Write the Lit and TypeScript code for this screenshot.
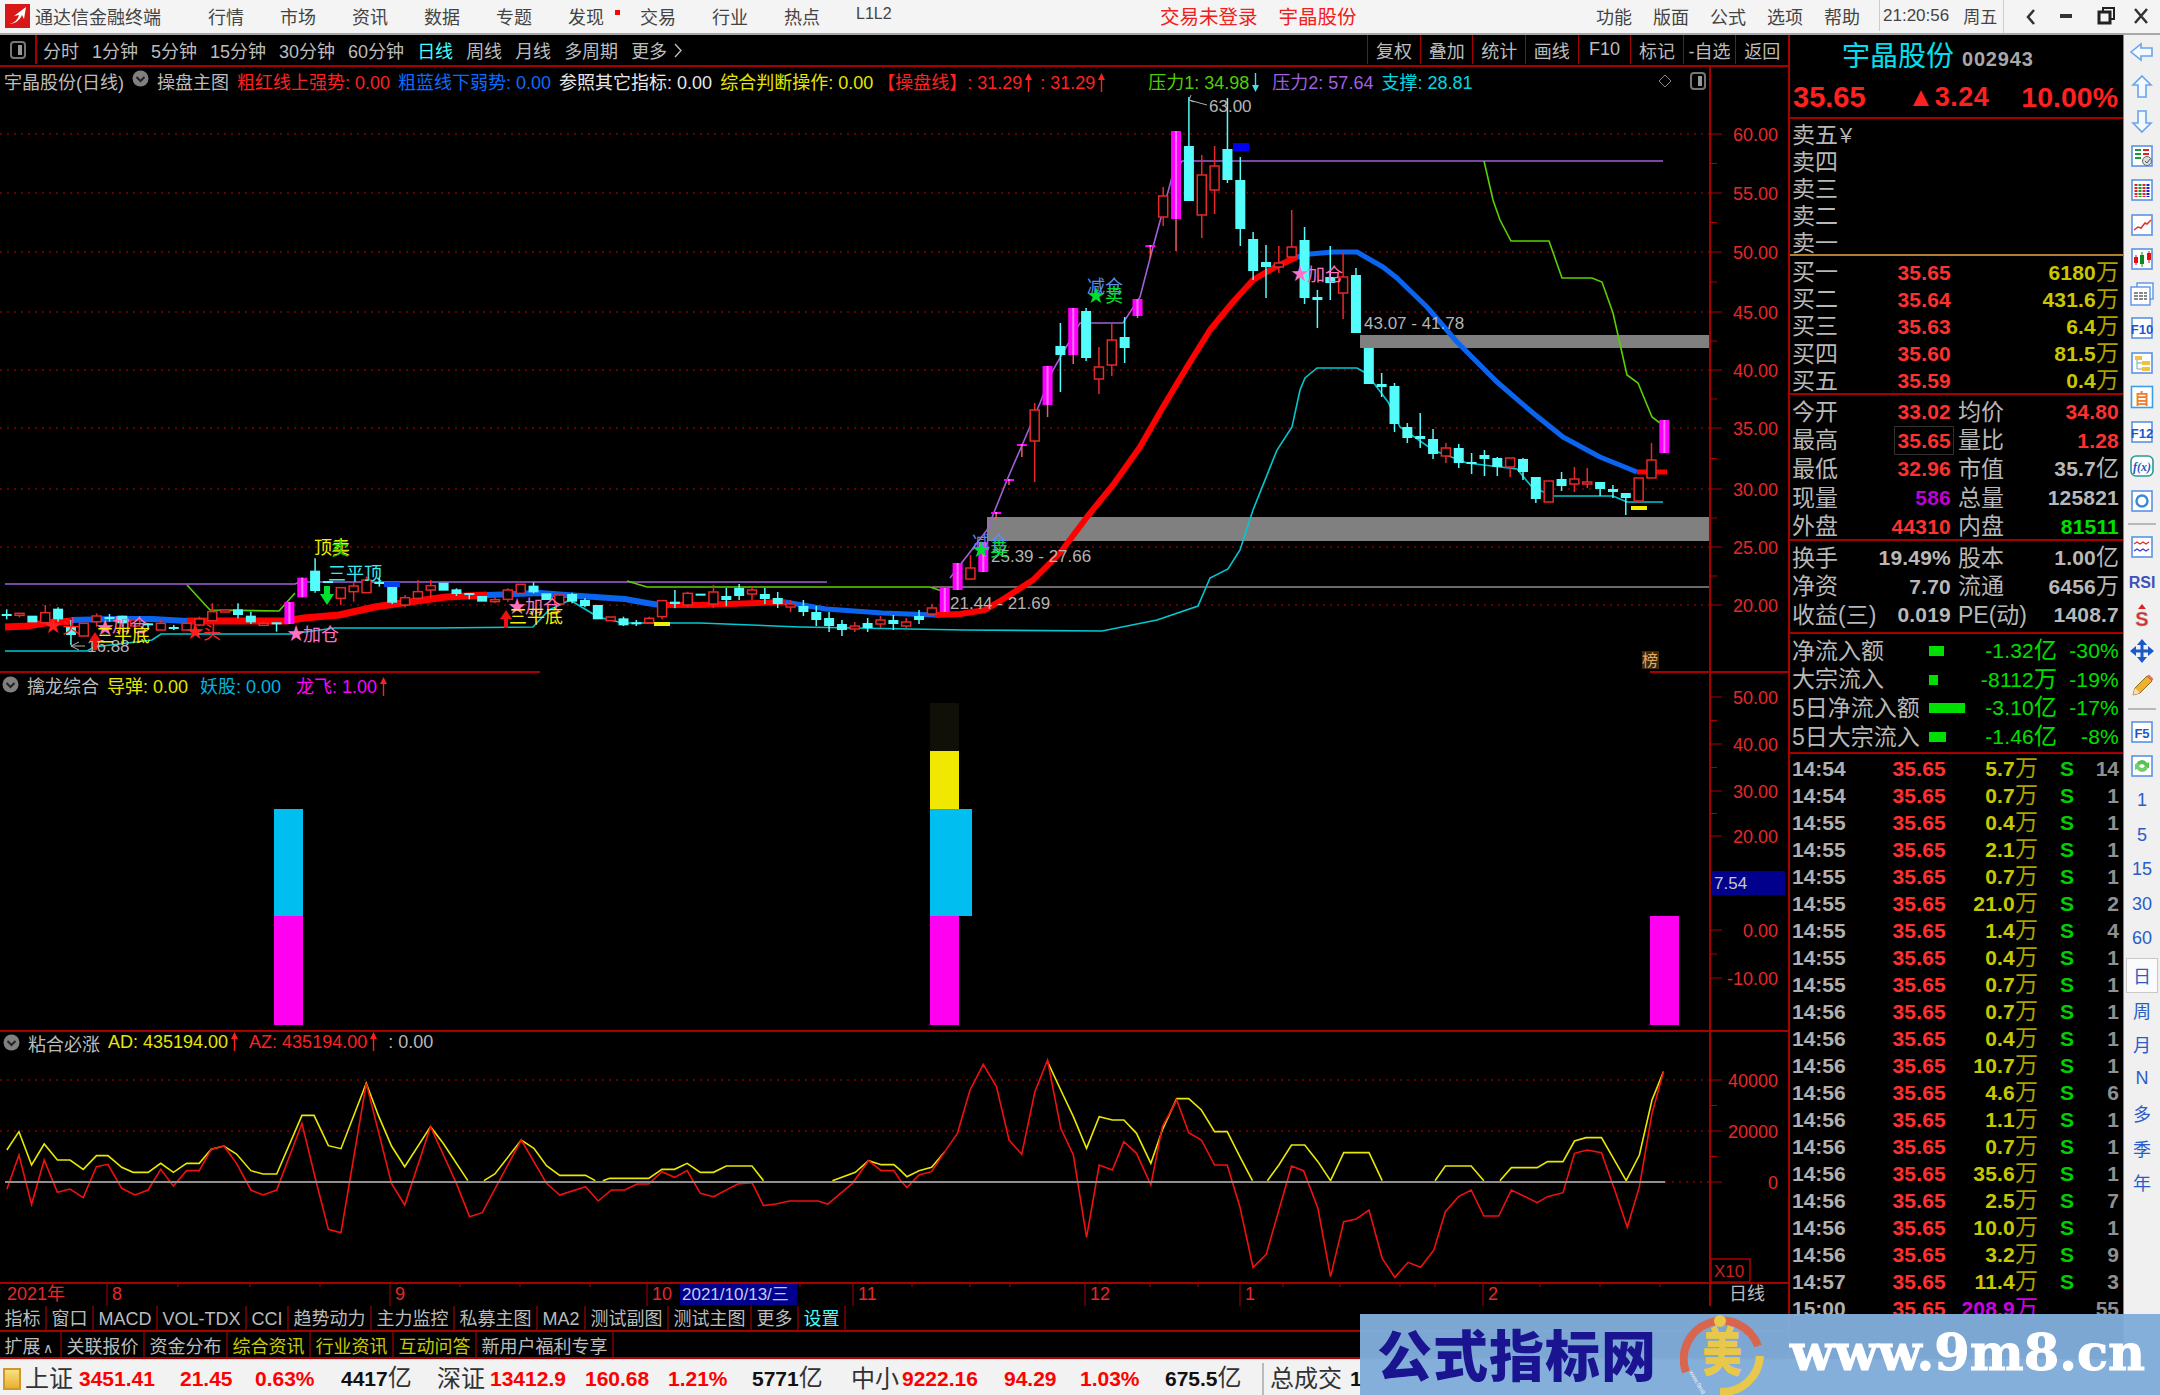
import {css, html, LitElement, svg} from "lit";
import {customElement} from "lit/decorators.js";

type Pt = number[];
type Candle = [string, number, number, number?, number?];

const pts = (a: Pt[]) => a.map((p) => p.join(",")).join(" ");

// candle centres, 12.85px apart
const candleX = (i: number) => 6.7 + 12.85 * i;

// left part: y given in crop units (520 + v / 3)
const leftCandles: Candle[] = ([
    ["c", 282, 285, 268, 298], ["r", 280, 284, 280, 292], ["c", 287, 307], ["r", 278, 308, 255, 308],
    ["c", 266, 298, 262, 305], ["c", 320, 345, 300, 375], ["r", 310, 348], ["r", 288, 305, 280, 320],
    ["c", 291, 294, 282, 305], ["c", 287, 310, 287, 320], ["r", 300, 318], ["c", 310, 313, 310, 330],
    ["r", 310, 330, 300, 330], ["c", 321, 324, 315, 330], ["r", 310, 330], ["r", 297, 315, 290, 318],
    ["r", 275, 302, 250, 305], ["r", 270, 274], ["c", 268, 285, 250, 295], ["c", 287, 307, 275, 312],
    ["r", 310, 314, 305, 316], ["c", 307, 309, 307, 335], ["m", 246, 312], ["m", 173, 232],
    ["c", 152, 213, 115, 218], ["c", 183, 186], ["r", 203, 235, 203, 255], ["r", 198, 215, 185, 245],
    ["r", 180, 218, 170, 218], ["c", 186, 189, 170, 200], ["c", 200, 248, 200, 252], ["r", 233, 255, 225, 262],
    ["r", 215, 235, 180, 240], ["r", 197, 210, 180, 235], ["c", 188, 212], ["c", 208, 222, 205, 228],
    ["c", 219, 223, 219, 238], ["c", 228, 245], ["r", 239, 242, 232, 248], ["r", 210, 238, 205, 245],
    ["r", 193, 220], ["c", 197, 217, 187, 220], ["c", 220, 240], ["r", 225, 252], ["c", 222, 245, 218, 250],
    ["c", 240, 258, 235, 262], ["c", 255, 298], ["r", 291, 302], ["c", 295, 316, 290, 318],
    ["c", 307, 310, 300, 318], ["r", 295, 308, 290, 310], ["r", 242, 290, 240, 298], ["c", 245, 252, 210, 265],
    ["r", 220, 255, 215, 262], ["c", 221, 224],
] as Candle[]).map(([t, a, b, c, d]) => [t, 520 + a / 3, 520 + b / 3, c === undefined ? undefined : 520 + c / 3, d === undefined ? undefined : 520 + d / 3] as Candle);

// the rest in page pixels
const restCandles: Candle[] = [
    ["r", 592, 604, 585, 608], ["c", 596, 600, 588, 606], ["c", 588, 596, 584, 600], ["r", 590, 594, 586, 600],
    ["c", 594, 599, 588, 604], ["c", 598, 604, 592, 608], ["r", 604, 607, 600, 612], ["c", 606, 612, 600, 616],
    ["c", 612, 620, 606, 626], ["c", 618, 626, 612, 632], ["c", 624, 630, 620, 636], ["r", 626, 629, 622, 632],
    ["c", 623, 628, 618, 632], ["r", 620, 624, 616, 628], ["c", 620, 624, 615, 630], ["r", 622, 626, 618, 628],
    ["c", 616, 620, 610, 624], ["r", 608, 614, 604, 616],
    ["m", 588, 612], ["m", 563, 590], ["r", 568, 579, 555, 579], ["m", 542, 572],
    ["m", 512, 513, 512, 520], ["m", 479, 480, 479, 485], ["m", 444, 445, 444, 457], ["r", 410, 441, 403, 482],
    ["m", 366, 405, 366, 417], ["c", 346, 355, 323, 392], ["m", 308, 355, 308, 364], ["c", 311, 358, 308, 361],
    ["r", 367, 379, 347, 394], ["r", 340, 365, 323, 376], ["c", 337, 348, 317, 363], ["m", 299, 316, 299, 318],
    ["m", 245, 246, 245, 258], ["r", 196, 217, 187, 226], ["m", 131, 219, 131, 251], ["c", 146, 201, 97, 201],
    ["r", 175, 215, 155, 238], ["r", 166, 190, 146, 214], ["c", 149, 180, 98, 183], ["c", 180, 229, 157, 246],
    ["c", 239, 271, 232, 280], ["c", 262, 267, 245, 298], ["r", 263, 267, 246, 273], ["r", 247, 257, 210, 257],
    ["c", 240, 298, 227, 304], ["c", 297, 300, 290, 328], ["c", 277, 283, 246, 300], ["r", 277, 293, 252, 319],
    ["c", 275, 333, 268, 333], ["c", 348, 384], ["c", 384, 387, 373, 397], ["c", 386, 424, 383, 432],
    ["c", 427, 438, 423, 443], ["c", 436, 439, 413, 448], ["c", 439, 454, 429, 459], ["r", 448, 456, 443, 463],
    ["c", 448, 463, 444, 468], ["c", 462, 464, 453, 474], ["c", 455, 459, 450, 476], ["c", 458, 467, 457, 476],
    ["r", 458, 467, 458, 477], ["c", 459, 472, 458, 480], ["c", 477, 499, 477, 503], ["r", 481, 502],
    ["c", 479, 486, 472, 491], ["r", 479, 484, 467, 492], ["r", 482, 484, 468, 488], ["c", 482, 489, 482, 496],
    ["c", 489, 492, 485, 498], ["c", 493, 498, 493, 515], ["r", 478, 501, 478, 503], ["r", 460, 478, 443, 478],
    ["m", 420, 453],
];
const candles = [...leftCandles, ...restCandles];

const thick: [string, Pt[], number][] = [
    ["#f00", [[5, 627], [27, 626], [45, 623], [71, 621]], 7],
    ["#0a64f0", [[71, 620], [112, 619], [152, 619], [187, 621]], 6],
    ["#f00", [[187, 621], [223, 621], [286, 621], [304, 618], [339, 615], [375, 607], [402, 603], [446, 597], [487, 595]], 7],
    ["#0a64f0", [[487, 595], [540, 593], [580, 596], [625, 599], [647, 603], [660, 605]], 6],
    ["#f00", [[660, 605], [700, 605], [785, 602]], 6],
    ["#0a64f0", [[785, 602], [826, 609], [882, 613], [935, 615]], 5],
    ["#f00", [[935, 615], [960, 614], [985, 610], [1005, 598], [1033, 580], [1060, 553], [1087, 517], [1113, 485], [1140, 447], [1163, 407], [1187, 367], [1210, 330], [1233, 302], [1253, 280], [1275, 267], [1297, 257]], 6],
    ["#0a64f0", [[1297, 257], [1310, 254], [1333, 252], [1357, 252], [1383, 267], [1397, 278], [1427, 307], [1457, 342], [1497, 382], [1533, 413], [1563, 437], [1600, 457], [1637, 472]], 5],
    ["#f00", [[1637, 472], [1667, 472]], 5],
];

const thin: [string, Pt[]][] = [
    ["#a060d8", [[5, 584], [295, 584], [300, 582], [827, 582]]],
    ["#a060d8", [[950, 578], [987, 530], [1007, 480], [1023, 443], [1040, 403], [1053, 370], [1080, 323], [1123, 323], [1140, 297], [1153, 247], [1172, 177], [1182, 161], [1663, 161]]],
    ["#5ad000", [[187, 585], [210, 610], [279, 611], [295, 593]]],
    ["#5ad000", [[627, 581], [647, 587], [930, 587], [945, 592]]],
    ["#5ad000", [[1484, 161], [1493, 200], [1500, 220], [1511, 241], [1549, 241], [1562, 278], [1592, 278], [1602, 282], [1613, 313], [1627, 375], [1638, 383], [1652, 417], [1660, 423]]],
    ["#00c8d0", [[5, 651], [87, 651], [94, 647], [152, 640], [161, 634], [290, 634], [335, 628], [435, 628], [533, 627], [549, 610], [570, 600], [598, 617], [623, 623], [700, 623], [800, 627], [965, 630], [1102, 631], [1157, 620], [1198, 606], [1210, 578], [1228, 569], [1240, 550], [1253, 510], [1277, 450], [1292, 427], [1300, 390], [1305, 378], [1317, 368], [1357, 368], [1364, 372], [1373, 382], [1388, 402], [1400, 427], [1433, 450], [1467, 463], [1517, 469], [1532, 487], [1553, 496], [1613, 496], [1627, 502], [1663, 502]]],
];

// third panel lines, read off two crops
const a = (p: number[]) => [p[0] / 1.742, 1020 + p[1] / 3];
const b = (p: number[]) => [900 + p[0] / 1.742, 1020 + p[1] / 3];
const yellowLines: Pt[][] = [
    [[12, 390], [33, 335], [55, 435], [77, 372], [100, 420], [122, 420], [145, 448], [168, 407], [188, 407], [212, 442], [232, 457], [258, 457], [280, 430], [302, 457], [325, 430], [347, 430], [368, 388], [390, 378], [412, 402], [437, 452], [458, 462], [482, 462], [526, 286], [547, 286], [572, 377], [594, 386], [638, 190], [660, 290], [682, 378], [705, 440], [750, 320], [772, 370], [815, 482]].map(a),
    [[843, 482], [862, 462], [908, 360], [930, 385], [952, 437], [975, 466], [1020, 466], [1037, 482]].map(a),
    [[1050, 482], [1062, 475], [1130, 475], [1153, 448], [1175, 448], [1197, 430], [1220, 457], [1243, 457], [1265, 438], [1310, 438], [1330, 482]].map(a),
    [[1450, 482], [1490, 457], [1513, 422], [1535, 434], [1557, 434], [1568, 450]].map(a).concat([[0, 450], [12, 470], [33, 452], [55, 442], [78, 395]].map(b)),
    [[257, 125], [280, 210], [302, 290], [325, 385], [347, 290], [370, 300], [390, 300], [412, 340], [437, 430], [457, 330], [482, 236], [503, 236], [525, 270], [548, 335], [570, 335], [592, 410], [614, 482]].map(b),
    [[640, 482], [660, 435], [682, 375], [705, 375], [728, 425], [750, 482], [773, 398], [817, 398], [840, 482]].map(b),
    [[932, 482], [950, 438], [995, 438], [1017, 482]].map(b),
    [[1045, 482], [1065, 443], [1110, 443], [1128, 425], [1155, 425], [1175, 363], [1195, 353], [1222, 353], [1265, 482], [1288, 405], [1310, 240], [1330, 155]].map(b),
];
const redLine: Pt[] = [
    ...[[12, 508], [33, 405], [55, 553], [77, 420], [100, 517], [122, 507], [145, 533], [168, 440], [188, 433], [212, 505], [235, 525], [258, 510], [280, 448], [302, 498], [325, 452], [347, 452], [368, 388], [390, 378], [412, 430], [437, 510], [458, 525], [482, 510], [526, 310], [550, 480], [572, 628], [594, 638], [638, 190], [682, 490], [705, 555], [750, 320], [795, 490], [818, 590], [840, 578], [908, 360], [952, 490], [975, 525], [1020, 500], [1042, 543], [1065, 510], [1088, 510], [1110, 492], [1130, 492], [1153, 455], [1175, 472], [1197, 452], [1220, 520], [1243, 530], [1285, 492], [1310, 488], [1330, 557], [1352, 552], [1375, 543], [1425, 543], [1442, 552], [1485, 490], [1513, 422], [1535, 452], [1557, 452], [1568, 480]].map(a),
    ...[[12, 503], [33, 465], [55, 455], [78, 395], [100, 340], [122, 210], [145, 133], [168, 200], [190, 360], [212, 403], [235, 215], [257, 120], [280, 325], [302, 405], [325, 652], [347, 435], [370, 450], [390, 365], [412, 400], [437, 495], [457, 320], [482, 240], [503, 338], [525, 360], [548, 435], [570, 435], [592, 560], [615, 742], [638, 703], [682, 438], [703, 452], [728, 565], [750, 770], [773, 605], [795, 597], [817, 570], [840, 715], [862, 772], [885, 727], [907, 742], [930, 690], [950, 575], [973, 530], [995, 510], [1017, 588], [1043, 588], [1065, 510], [1110, 548], [1128, 530], [1155, 518], [1175, 400], [1197, 390], [1222, 398], [1245, 510], [1267, 622], [1288, 500], [1310, 280], [1330, 155]].map(b),
];

const priceTicks: [string, number][] = [["60.00", 134], ["55.00", 193], ["50.00", 252], ["45.00", 312], ["40.00", 370], ["35.00", 428], ["30.00", 489], ["25.00", 547], ["20.00", 605]];
const volTicks: [string, number][] = [["50.00", 697], ["40.00", 744], ["30.00", 791], ["20.00", 836], ["0.00", 930], ["-10.00", 978]];
const adTicks: [string, number][] = [["40000", 1080], ["20000", 1131], ["0", 1182]];

const menus = ["行情", "市场", "资讯", "数据", "专题", "发现", "交易", "行业", "热点", "L1L2"];
const sysMenus = ["功能", "版面", "公式", "选项", "帮助"];
const periods = ["分时", "1分钟", "5分钟", "15分钟", "30分钟", "60分钟", "日线", "周线", "月线", "多周期", "更多"];
const tools = ["复权", "叠加", "统计", "画线", "F10", "标记", "-自选", "返回"];
const tabs1 = ["指标", "窗口", "MACD", "VOL-TDX", "CCI", "趋势动力", "主力监控", "私募主图", "MA2", "测试副图", "测试主图", "更多", "设置"];
const tabs2 = ["扩展", "关联报价", "资金分布", "综合资讯", "行业资讯", "互动问答", "新用户福利专享"];

const buys = [["买一", "35.65", "6180万"], ["买二", "35.64", "431.6万"], ["买三", "35.63", "6.4万"], ["买四", "35.60", "81.5万"], ["买五", "35.59", "0.4万"]];
const quoteRows = [
    ["今开", "33.02", "red", "均价", "34.80", "red"], ["最高", "35.65", "red boxed", "量比", "1.28", "red"], ["最低", "32.96", "red", "市值", "35.7亿", "grey"],
    ["现量", "586", "purple", "总量", "125821", "grey"], ["外盘", "44310", "red", "内盘", "81511", "green"],
];
const finRows = [["换手", "19.49%", "股本", "1.00亿"], ["净资", "7.70", "流通", "6456万"], ["收益(三)", "0.019", "PE(动)", "1408.7"]];
const flowRows: [string, number, number, string, string][] = [
    ["净流入额", 15, 10, "-1.32亿", "-30%"], ["大宗流入", 9, 10, "-8112万", "-19%"], ["5日净流入额", 36, 10, "-3.10亿", "-17%"], ["5日大宗流入", 17, 10, "-1.46亿", "-8%"],
];
const ticks = [
    ["14:54", "5.7万", "14"], ["14:54", "0.7万", "1"], ["14:55", "0.4万", "1"], ["14:55", "2.1万", "1"], ["14:55", "0.7万", "1"], ["14:55", "21.0万", "2"], ["14:55", "1.4万", "4"],
    ["14:55", "0.4万", "1"], ["14:55", "0.7万", "1"], ["14:56", "0.7万", "1"], ["14:56", "0.4万", "1"], ["14:56", "10.7万", "1"], ["14:56", "4.6万", "6"], ["14:56", "1.1万", "1"],
    ["14:56", "0.7万", "1"], ["14:56", "35.6万", "1"], ["14:56", "2.5万", "7"], ["14:56", "10.0万", "1"], ["14:56", "3.2万", "9"], ["14:57", "11.4万", "3"], ["15:00", "208.9万", "55"],
];
const statusItems: [string, string, number][] = [
    ["上证", "lab", 25], ["3451.41", "up", 79], ["21.45", "up", 180], ["0.63%", "up", 255], ["4417亿", "amt", 341],
    ["深证", "lab", 437], ["13412.9", "up", 490], ["160.68", "up", 585], ["1.21%", "up", 668], ["5771亿", "amt", 752],
    ["中小", "lab", 851], ["9222.16", "up", 902], ["94.29", "up", 1004], ["1.03%", "up", 1080], ["675.5亿", "amt", 1165],
    ["", "sep", 1262], ["总成交", "lab", 1268], ["1", "amt", 1348],
];

const box = svg`<rect x="3" y="3" width="20" height="20" fill="#fff" stroke="#5b93e6" stroke-width="1.6"/>`;
const iconMap: Record<string, unknown> = {
    left: svg`<path d="M2 13 12 5v4h11v8H12v4z" fill="#f4f8ff" stroke="#69a4ea" stroke-width="1.6"/>`,
    up: svg`<path d="M13 2 22 11h-5v12H9V11H4z" fill="#f4f8ff" stroke="#69a4ea" stroke-width="1.6"/>`,
    down: svg`<path d="M13 24 22 15h-5V3H9v12H4z" fill="#f4f8ff" stroke="#69a4ea" stroke-width="1.6"/>`,
    list: svg`${box}<path d="M6 7h6M6 11h6M6 15h6" stroke="#1a9a2a" stroke-width="2"/><path d="M14 7h6M14 11h6" stroke="#e02020" stroke-width="2"/><circle cx="18" cy="18" r="4.5" fill="#ddd" stroke="#666"/><path d="M16 18l2 2 3-4" stroke="#555" fill="none"/>`,
    grid: svg`${box}<path d="M7 7v13" stroke="#e02020" stroke-width="3" stroke-dasharray="2 1"/><path d="M11 7v13" stroke="#1a9a2a" stroke-width="3" stroke-dasharray="2 1"/><path d="M15 7v13" stroke="#e02020" stroke-width="3" stroke-dasharray="2 1"/><path d="M19 7v13" stroke="#2020d0" stroke-width="3" stroke-dasharray="2 1"/>`,
    line: svg`${box}<path d="M5 18l4-3 3 1 4-5 2 1 4-4" stroke="#e03030" fill="none" stroke-width="1.5"/>`,
    candle: svg`${box}<path d="M7 9v10M20 5v12" stroke="#d01010"/><path d="M13 6v15" stroke="#108a20"/><rect x="5" y="11" width="4" height="6" fill="#e01010"/><rect x="11" y="9" width="4" height="9" fill="#108a20"/><rect x="18" y="7" width="4" height="7" fill="#e01010"/>`,
    copy: svg`<rect x="8" y="2" width="16" height="16" fill="#fff" stroke="#5b93e6" stroke-width="1.4"/><rect x="2" y="6" width="19" height="18" fill="#fff" stroke="#5b93e6" stroke-width="1.4"/><path d="M5 12h13M5 15h13M5 18h13" stroke="#888" stroke-width="2" stroke-dasharray="4 1"/>`,
    f10: svg`${box}<text x="13" y="18.500" text-anchor="middle" class="ico-t">F10</text>`,
    tree: svg`${box}<rect x="6" y="6" width="7" height="4" fill="#f0c040"/><rect x="13" y="11" width="8" height="4" fill="#f0c040"/><rect x="13" y="17" width="8" height="4" fill="#f0c040"/><path d="M8 10v9h5M8 13h5" stroke="#7aa" fill="none"/>`,
    self: svg`<rect x="2.500" y="2.500" width="21" height="21" fill="#fff" stroke="#38a0e8" stroke-width="1.6"/><text x="13" y="19.500" text-anchor="middle" class="ico-z">自</text>`,
    f12: svg`${box}<text x="13" y="18.500" text-anchor="middle" class="ico-t">F12</text>`,
    fx: svg`<rect x="2" y="3" width="22" height="20" rx="5" fill="#fff" stroke="#2a9a90" stroke-width="1.6"/><text x="13" y="18" text-anchor="middle" class="ico-f">f(x)</text>`,
    ring: svg`${box}<circle cx="13" cy="13" r="5.5" fill="none" stroke="#3a88d8" stroke-width="2.4"/>`,
    wave: svg`${box}<path d="M5 10l3-2 3 2 3-2 3 2 3-2" stroke="#e03030" fill="none" stroke-width="1.4"/><path d="M5 17l3-2 3 2 3-2 3 2 3-2" stroke="#4040d0" fill="none" stroke-width="1.4"/>`,
    rsi: svg`<text x="13" y="19" text-anchor="middle" class="ico-r">RSI</text>`,
    sell: svg`<path d="M13 1l4 5h-8z" fill="#e02020"/><text x="13" y="23" text-anchor="middle" class="ico-s">S</text>`,
    move: svg`<path d="M13 1l5 6h-3.500v4.500H19V8l6 5-6 5v-3.500h-4.500V19H18l-5 6-5-6h3.500v-4.500H7V18l-6-5 6-5v3.500h4.500V7H8z" fill="#1a58c8"/>`,
    pencil: svg`<path d="M4 23l2-7L18 4l5 5L11 21z" fill="#f0b030" stroke="#8a6a20"/><path d="M18 4l5 5 1.500-2-4.500-4.500z" fill="#e07070"/><path d="M4 23l2-7 5 5z" fill="#f4e0b0"/>`,
    f5: svg`${box}<text x="13" y="19" text-anchor="middle" class="ico-t">F5</text>`,
    refresh: svg`${box}<path d="M7 12a6 6 0 0 1 11-2l2-1v6h-6l2-2a4 4 0 0 0-7 0z" fill="#58c050"/><path d="M19 14a6 6 0 0 1-11 2l-2 1v-6h6l-2 2a4 4 0 0 0 7 0z" fill="#70d070"/>`,
};
const stripItems: [string, string][] = [
    ["i", "left"], ["i", "up"], ["i", "down"], ["i", "list"], ["i", "grid"], ["i", "line"], ["i", "candle"], ["i", "copy"], ["i", "f10"], ["i", "tree"], ["i", "self"], ["i", "f12"], ["i", "fx"], ["i", "ring"],
    ["d", ""], ["i", "wave"], ["i", "rsi"], ["i", "sell"], ["i", "move"], ["i", "pencil"], ["d", ""], ["i", "f5"], ["i", "refresh"],
    ["t", "1"], ["t", "5"], ["t", "15"], ["t", "30"], ["t", "60"], ["a", "日"], ["t", "周"], ["t", "月"], ["t", "N"], ["t", "多"], ["t", "季"], ["t", "年"],
];

// the tall thin arrows behind the legend values
const arrow = (color: string, down = false) => html`<svg class="arrow" width="7" height="19" viewBox="0 0 7 19"><path d=${down ? "M3.500 19 7 12H4.200V0H2.800V12H0z" : "M3.500 0 7 7H4.200V19H2.800V7H0z"} fill=${color}/></svg>`;

@customElement("app-root")
export class AppRoot extends LitElement {
    static styles = css`
        :host {
            display: block;
            position: relative;
            width: 2160px;
            height: 1395px;
            overflow: hidden;
            background: #000;
            font-family: "Liberation Sans", "Noto Sans CJK SC", sans-serif;
            font-size: 18px;
            color: #bcbcbc;
        }
        .page { display: flex; flex-direction: column; height: 100%; }
        .title {
            display: flex;
            align-items: center;
            height: 31px;
            padding-bottom: 2px;
            flex: none;
            background: #f4f4f4;
            border-bottom: 2px solid #a8a8a8;
            color: #444;
            white-space: nowrap;
        }
        .logo { margin-left: 5px; width: 25px; height: 24px; flex: none; }
        .app-name { margin-left: 5px; width: 130px; font-size: 18px; }
        .menus { display: flex; gap: 36px; margin-left: 43px; }
        .menus span { position: relative; min-width: 36px; }
        .menus .small { font-size: 16px; padding-top: 2px; }
        .menus .dot::after { content: ""; position: absolute; left: 47px; top: 7px; width: 5px; height: 5px; background: #f00; }
        .alert { margin-left: 268px; color: #f02020; font-size: 19.5px; display: flex; gap: 21px; }
        .sys { margin-left: auto; display: flex; gap: 21px; padding-right: 19px; }
        .clock { border-left: 1px solid #ccc; padding-left: 3px; width: 120px; display: flex; gap: 14px; font-size: 17px; align-items: center; align-self: stretch; }
        .win { border-left: 1px solid #ccc; align-self: stretch; width: 156px; }
        .body { display: flex; height: 1324px; flex: none; }
        .left { width: 1788px; flex: none; display: flex; flex-direction: column; }
        .toolbar { display: flex; height: 29px; padding-bottom: 1px; flex: none; align-items: center; border-bottom: 2px solid #a80000; white-space: nowrap; }
        .tb-icon { width: 35px; height: 100%; border-right: 2px solid #a80000; display: flex; align-items: center; justify-content: center; flex: none; }
        .periods { display: flex; gap: 13px; margin-left: 6px; align-items: center; }
        .periods .on { color: #40ffff; }
        .periods svg { margin-left: 7px; }
        .tools { margin-left: auto; display: flex; height: 100%; }
        .tools span { width: 52.6px; display: flex; align-items: center; justify-content: center; border-left: 1px solid #a80000; box-sizing: border-box; }
        .panel { position: relative; flex: none; }
        .p1 { height: 606px; }
        .p2 { height: 357px; border-top: 2px solid transparent; box-sizing: border-box; }
        .p3 { height: 252px; border-top: 2px solid #a80000; box-sizing: border-box; }
        .legend { display: flex; align-items: center; white-space: nowrap; gap: 8px; padding-left: 4px; }
        .p1 .legend { height: 27px; margin-bottom: 2px; }
        .p2 .legend { height: 19px; margin-bottom: 4px; padding-left: 2px; }
        .p3 .legend { height: 21px; margin-bottom: 3px; padding-left: 3px; }
        .legend .mn4 { margin-left: -4px; }
        .legend .m2 { margin-left: 2px; }
        .legend .m4 { margin-left: 4px; }
        .legend .m7 { margin-left: 7px; }
        .legend .m32 { margin-left: 32px; }
        .legend .end { margin-left: auto; margin-right: 82px; display: flex; gap: 18px; align-items: center; }
        .arrow { vertical-align: -3px; margin: 0 3px; }
        .chart { display: block; overflow: visible; }
        .chart text { font-family: "Liberation Sans", "Noto Sans CJK SC", sans-serif; font-size: 18px; }
        .dot-line { stroke: #c00000; stroke-width: 1; stroke-dasharray: 2 5; }
        .axis-line { stroke: #a80000; stroke-width: 2; }
        .tick { stroke: #a80000; stroke-width: 1; }
        .axis-label { fill: #e62828; }
        .note { fill: #b4b4b4; font-size: 17px !important; }
        .yellow { color: #e6e600; }
        .red { color: #ff2020; }
        .blue { color: #0a6cff; }
        .white { color: #e8e8e8; }
        .green { color: #50d000; }
        .violet { color: #a060e0; }
        .cyan { color: #00d8e0; }
        .sky { color: #00b4e0; }
        .magenta { color: #ff00ff; }
        .timeline { display: block; flex: none; overflow: visible; }
        .tabs { display: flex; flex: none; border-bottom: 2px solid #a80000; white-space: nowrap; overflow: hidden; }
        .t1 { height: 24px; }
        .t2 { height: 25px; }
        .tabs span { padding: 0 4.5px; border-right: 2px solid #600000; }
        .t1 span { line-height: 27px; }
        .t2 span { line-height: 30px; }
        .tabs .gold { color: #c8c800; }
        .tabs .teal { color: #40ffff; }
        .tabs span i { font: 14px "DejaVu Sans", sans-serif; display: inline-block; width: 15px; text-align: center; }
        .quote { width: 335px; flex: none; box-sizing: border-box; border-left: 2px solid #a80000; overflow: hidden; }
        .q-head { height: 84px; box-sizing: border-box; border-bottom: 2px solid #a80000; }
        .q-name { display: flex; align-items: baseline; height: 40px; padding-left: 52px; padding-top: 4px; gap: 8px; box-sizing: border-box; }
        .q-name b { font-weight: 400; font-size: 28px; line-height: 36px; color: #00e0f0; }
        .q-name i { font-style: normal; font-weight: 700; font-size: 20px; letter-spacing: .8px; color: #a8a8a8; }
        .q-price { display: flex; font-weight: 700; color: #ff2020; font-size: 29px; line-height: 44px; padding-left: 3px; }
        .q-price .chg { margin-left: 42px; font-size: 27px; letter-spacing: .5px; }
        .q-price .pct { margin-left: auto; font-size: 28.5px; padding-right: 5px; }
        .row { display: grid; align-items: center; padding-left: 2px; padding-right: 4px; white-space: nowrap; }
        .lab { font-size: 23px; color: #b8b8b8; line-height: 1; }
        .num { font-weight: 700; font-size: 21px; text-align: right; letter-spacing: .2px; }
        .unit { font-weight: 400; font-size: 23px; line-height: 1; letter-spacing: 0; }
        .sell { grid-template-columns: 60px 1fr; height: 27px; }
        .sell .lab .yen { margin-left: -2px; font-size: 20px; }
        .sect { box-sizing: border-box; border-bottom: 2px solid #a80000; padding-top: 3px; }
        .sect.sells { height: 137px; border-bottom-color: #b08030; }
        .sect.buys { height: 139px; }
        .buy { grid-template-columns: 60px 99px 1fr; height: 27.2px; }
        .amt { color: #c8c800; }
        .amt .unit { color: #b0a000; }
        .px { color: #ff3030; }
        .q4 { grid-template-columns: 60px 99px 60px 1fr; height: 28.6px; }
        .q4 .lab2 { margin-left: 7px; }
        .sect.quotes { height: 146px; }
        .sect.fins { height: 93px; }
        .sect.flows { height: 120px; }
        .grey { color: #b8b8b8; }
        .purple { color: #c000d0; }
        .green-n { color: #00e000; }
        .boxed span.b { outline: 1px solid #303030; outline-offset: 2px; }
        .flow { grid-template-columns: 137px 40px 1fr 62px; height: 28.6px; }
        .flow .num { font-weight: 400; color: #00e000; }
        .flow .unit { color: #00e000; }
        .bar { background: #00e000; display: block; }
        .ticklist { padding-top: 1px; }
        .tickrow { grid-template-columns: 54px 100px 92px 36px 1fr; height: 27px; }
        .tickrow .time { font-weight: 700; font-size: 21px; color: #b0b0b0; }
        .tickrow .s { color: #00d000; font-weight: 700; font-size: 21px; text-align: right; }
        .tickrow .cnt { color: #909090; font-weight: 700; font-size: 21px; text-align: right; }
        .tickrow .big { color: #d000e0; }
        .strip { width: 37px; flex: none; background: #f0f0f0; border-left: 1px solid #888; box-sizing: border-box; display: flex; flex-direction: column; align-items: center; }
        .strip .it { height: 34.5px; flex: none; display: flex; align-items: center; justify-content: center; width: 100%; color: #2a5cc8; font-size: 18px; }
        .strip .it.act { box-sizing: border-box; width: 32px; background: #fbfbfb; border: 1px solid #c8c8c8; margin-top: 2px; }
        .strip .sep { height: 12px; width: 28px; flex: none; position: relative; }
        .strip .sep::after { content: ""; position: absolute; left: 0; right: 0; top: 5px; height: 2px; background: #b8b8b8; }
        .ico-t { font: 700 13px "Liberation Sans", sans-serif; fill: #1a58c8; }
        .ico-z { font: 700 15px "Noto Sans CJK SC", sans-serif; fill: #f08030; }
        .ico-f { font: italic 700 12px "Liberation Serif", serif; fill: #1a58c8; }
        .ico-r { font: 700 16px "Liberation Sans", sans-serif; fill: #4050b8; }
        .ico-s { font: 700 20px "Liberation Sans", sans-serif; fill: #d83030; stroke: #aaa; stroke-width: .4; }
        .status { height: 36px; padding-top: 2px; flex: none; background: #f2f2f2; position: relative; display: flex; align-items: center; white-space: nowrap; border-top: 1px solid #ddd; box-sizing: border-box; font-size: 21px; }
        .status .sicon { width: 18px; height: 22px; margin-left: 3px; margin-right: 4px; flex: none; box-sizing: border-box; background: linear-gradient(#f8e080, #e8b030); border: 2px solid #d09828; }
        .status .st { flex: none; overflow: visible; }
        .status .lab { color: #333; font-size: 24px; }
        .status .up { color: #f00; font-weight: 700; }
        .status .amt { color: #111; font-weight: 700; }
        .status .amt .unit { color: #333; font-size: 24px; }
        .status .sep { border-left: 2px solid #bbb; height: 32px; }
        .mark {
            position: absolute;
            right: 0;
            bottom: 0;
            width: 800px;
            height: 81px;
            padding-bottom: 6px;
            box-sizing: border-box;
            background: rgba(128, 172, 218, .97);
            display: flex;
            align-items: center;
            white-space: nowrap;
        }
        .mark .cn { margin-left: 17px; width: 303px; font: 900 55px "Noto Sans CJK SC", sans-serif; color: #1a1490; letter-spacing: 1px; }
        .mark svg { width: 84px; height: 81px; flex: none; margin-bottom: -6px; }
        .mark .en { margin-left: 26px; font: 700 51px "DejaVu Serif", serif; color: #fff; -webkit-text-stroke: 1px #fff; }
    `;

    private renderCandle(c: Candle, i: number) {
        const [t, top, bot, wt, wb] = c;
        const x = candleX(i);
        const col = t === "r" ? "#e82828" : t === "m" ? "#ff00ff" : "#54fcfc";
        const wick = wt !== undefined ? svg`<line x1=${x} x2=${x} y1=${wt} y2=${wb} stroke=${t === "m" ? "#e86060" : col} stroke-width="1.5"/>` : "";
        const h = Math.max(bot - top, 2);
        if (t === "r")
            return svg`${wick}<rect x=${x - 4.5} y=${top} width="9" height=${h} fill="#000" stroke=${col} stroke-width="1.5"/>`;
        if (t === "m")
            return svg`${wick}<rect x=${x - 5} y=${top} width="10" height=${h} fill=${col}/><line x1=${x} x2=${x} y1=${top} y2=${top + h} stroke="#ff70ff" stroke-width="2"/>`;
        return svg`${wick}<rect x=${x - 5} y=${top} width="10" height=${h} fill=${col}/>`;
    }

    private yTicks(list: [string, number][], extraMinor: boolean) {
        return list.map(([label, y], i) => svg`
            <line class="tick" x1="1710" x2="1722" y1=${y} y2=${y}/>
            ${extraMinor && i < list.length - 1 ? svg`<line class="tick" x1="1710" x2="1717" y1=${(y + list[i + 1][1]) / 2} y2=${(y + list[i + 1][1]) / 2}/>` : ""}
            <text class="axis-label" x="1778" y=${y + 7} text-anchor="end">${label}</text>`);
    }

    private renderMainChart() {
        return html`<svg class="chart" width="1788" height="577" viewBox="0 96 1788 577">
            ${priceTicks.map(([, y]) => svg`<line class="dot-line" x1="0" x2="1710" y1=${y} y2=${y}/>`)}
            <rect x="1360" y="335" width="350" height="13" fill="#808080"/>
            <rect x="987" y="517" width="723" height="24" fill="#808080"/>
            <line x1="932" x2="1710" y1="587" y2="587" stroke="#8c8c8c" stroke-width="1.5"/>
            ${thin.map(([c, p]) => svg`<polyline points=${pts(p)} fill="none" stroke=${c} stroke-width="1.6"/>`)}
            ${thick.map(([c, p, w]) => svg`<polyline points=${pts(p)} fill="none" stroke=${c} stroke-width=${w} stroke-linejoin="round"/>`)}
            ${candles.map((c, i) => this.renderCandle(c, i))}
            <rect x="1233" y="143" width="16" height="8" fill="#0000f0"/>
            <rect x="384" y="582" width="16" height="5" fill="#0040f0"/>
            <rect x="1631" y="506" width="16" height="4" fill="#f0f000"/>
            <rect x="654" y="622" width="16" height="4" fill="#f0f000"/>
            <path d="M1189 100l2-5m-2 5l5 2m-5-2 18 5" stroke="#b4b4b4" fill="none"/>
            <text class="note" x="1209" y="112">63.00</text>
            <text class="note" x="1364" y="329">43.07 - 41.78</text>
            <text class="note" x="991" y="562">25.39 - 27.66</text>
            <text class="note" x="950" y="609">21.44 - 21.69</text>
            <path d="M71 646l8-4m-8 4 8 4m-8-4h14" stroke="#b4b4b4" fill="none"/>
            <text class="note" x="87" y="652">16.88</text>
            <text x="314" y="554" fill="#f0f000">顶卖</text>
            <text x="331" y="555" fill="#30d000" font-size="14">卖</text>
            <text x="328" y="580" fill="#40e8f0">三平顶</text>
            <path d="M327 605l-7-11h4v-8h6v8h4z" fill="#00e030"/>
            <text x="44" y="632" fill="#ff2020">★</text><text x="62" y="633" fill="#ff2020">头</text>
            <text x="186" y="638" fill="#ff2020">★</text><text x="203" y="639" fill="#ff2020">头</text>
            <text x="287" y="640" fill="#ff70c0">★</text><text x="303" y="641" fill="#ff70c0">加仓</text>
            <text x="96" y="634" fill="#ff70c0">★</text><text x="112" y="632" fill="#ff70c0">加仓</text>
            <text x="96" y="642" fill="#f0f000">三平底</text>
            <path d="M95 632l6 9h-4v9h-4v-9h-4z" fill="#f01010"/>
            <text x="508" y="613" fill="#ff70c0">★</text><text x="525" y="613" fill="#ff70c0">加仓</text>
            <text x="509" y="623" fill="#f0f000">三平底</text>
            <path d="M506 610l6 9h-4v9h-4v-9h-4z" fill="#f01010"/>
            <text x="1087" y="293" fill="#5a90f0">减仓</text>
            <text x="1087" y="302" fill="#00e030">★卖</text>
            <text x="972" y="549" fill="#5a90f0">减仓</text>
            <text x="972" y="556" fill="#00e030">★卖</text>
            <text x="1291" y="280" fill="#ff70c0">★</text><text x="1307" y="281" fill="#ff70c0">加仓</text>
            <rect x="1642" y="651" width="17" height="18" fill="#3a2a10"/>
            <text x="1642" y="666" fill="#e8a860" style="font-size:16px">榜</text>
            <line class="axis-line" x1="1710" x2="1710" y1="66" y2="672"/>
            <line class="axis-line" x1="0" x2="540" y1="672" y2="672"/>
            <line class="axis-line" x1="1650" x2="1788" y1="672" y2="672"/>
            ${this.yTicks(priceTicks, true)}
        </svg>`;
    }

    private renderVolChart() {
        const bar = (x: number, y: number, w: number, h: number, c: string) => svg`<rect x=${x} y=${y} width=${w} height=${h} fill=${c}/>`;
        return html`<svg class="chart" width="1788" height="332" viewBox="0 698 1788 332">
            ${bar(930, 703, 29, 48, "#101008")}
            ${bar(274, 809, 29, 107, "#00bff0")}${bar(274, 916, 29, 109, "#ff00f0")}
            ${bar(930, 751, 29, 58, "#f0e800")}${bar(930, 809, 42, 107, "#00bff0")}${bar(930, 916, 29, 109, "#ff00f0")}
            ${bar(1650, 916, 29, 109, "#ff00f0")}
            <line class="axis-line" x1="1710" x2="1710" y1="673" y2="1030"/>
            ${this.yTicks(volTicks, true)}
            <rect x="1712" y="871" width="73" height="24" fill="#00008c"/>
            <text x="1714" y="889" fill="#c8c8c8" style="font-size:17px">7.54</text>
        </svg>`;
    }

    private renderAdChart() {
        return html`<svg class="chart" width="1788" height="226" viewBox="0 1056 1788 226">
            <line class="dot-line" x1="0" x2="1710" y1="1080" y2="1080"/>
            <line class="dot-line" x1="0" x2="1710" y1="1131" y2="1131"/>
            <line class="dot-line" x1="1665" x2="1710" y1="1182" y2="1182"/>
            ${yellowLines.map((l) => svg`<polyline points=${pts(l)} fill="none" stroke="#e8e800" stroke-width="1.6"/>`)}
            <polyline points=${pts(redLine)} fill="none" stroke="#f01010" stroke-width="1.6"/>
            <line x1="5" x2="1665" y1="1182" y2="1182" stroke="#909090" stroke-width="2"/>
            <line class="axis-line" x1="1710" x2="1710" y1="1031" y2="1282"/>
            ${this.yTicks(adTicks, true)}
            <rect x="1711" y="1259" width="39" height="23" fill="#000" stroke="#a80000" stroke-width="1.5"/>
            <text x="1714" y="1277" fill="#c82020" style="font-size:17px">X10</text>
        </svg>`;
    }

    private renderTimeline() {
        const labels: [string, number][] = [["8", 107], ["9", 390], ["10", 647], ["11", 853], ["12", 1085], ["1", 1240], ["2", 1483]];
        const minor = [178, 250, 320, 460, 520, 590, 800, 912, 970, 1010, 1150, 1198, 1283, 1340, 1400, 1435, 1540, 1600, 1660];
        return html`<svg class="timeline" width="1788" height="24" viewBox="0 1282 1788 24">
            <line class="axis-line" x1="0" x2="1788" y1="1283" y2="1283"/>
            ${minor.map((x) => svg`<line class="tick" x1=${x} x2=${x} y1="1283" y2="1287"/>`)}
            ${labels.map(([t, x]) => svg`<line class="tick" x1=${x} x2=${x} y1="1283" y2="1306"/><text class="axis-label" style="font:18px 'Liberation Sans'" x=${x + 5} y="1300">${t}</text>`)}
            <text style="font:18px 'Liberation Sans','Noto Sans CJK SC'" fill="#e62828" x="7" y="1300">2021年</text>
            <rect x="680" y="1284" width="117" height="21" fill="#00008c"/>
            <text style="font:17px 'Liberation Sans','Noto Sans CJK SC'" fill="#c8c8f0" x="682" y="1300">2021/10/13/三</text>
            <line class="axis-line" x1="1710" x2="1710" y1="1282" y2="1306"/>
            <text style="font:18px 'Noto Sans CJK SC'" fill="#bcbcbc" x="1729" y="1300">日线</text>
        </svg>`;
    }

    private value(v: string, cls = "") {
        const m = v.match(/^(.*?)(万|亿)?$/)!;
        return html`<span class="num ${cls}"><span class="b">${m[1]}</span>${m[2] ? html`<span class="unit">${m[2]}</span>` : ""}</span>`;
    }

    private renderQuote() {
        return html`<div class="quote">
            <div class="q-head">
                <div class="q-name"><b>宇晶股份</b><i>002943</i></div>
                <div class="q-price"><span>35.65</span><span class="chg">▲3.24</span><span class="pct">10.00%</span></div>
            </div>
            <div class="sect sells">
                ${["卖五", "卖四", "卖三", "卖二", "卖一"].map((l, i) => html`<div class="row sell"><span class="lab">${l}${i === 0 ? html`<span class="yen">￥</span>` : ""}</span></div>`)}
            </div>
            <div class="sect buys">
                ${buys.map(([l, p, v]) => html`<div class="row buy"><span class="lab">${l}</span>${this.value(p, "px")}${this.value(v, "amt")}</div>`)}
            </div>
            <div class="sect quotes">
                ${quoteRows.map(([l, v, c, l2, v2, c2]) => html`<div class="row q4"><span class="lab">${l}</span>${this.value(v, c === "red" ? "px" : c === "red boxed" ? "px boxed" : c)}<span class="lab lab2">${l2}</span>${this.value(v2, c2 === "red" ? "px" : c2 === "green" ? "green-n" : c2)}</div>`)}
            </div>
            <div class="sect fins">
                ${finRows.map(([l, v, l2, v2]) => html`<div class="row q4"><span class="lab">${l}</span>${this.value(v, "grey")}<span class="lab lab2">${l2}</span>${this.value(v2, "grey")}</div>`)}
            </div>
            <div class="sect flows">
                ${flowRows.map(([l, w, h, v, p]) => html`<div class="row flow"><span class="lab">${l}</span><span class="bar" style="width:${w}px;height:${h}px"></span>${this.value(v)}<span class="num">${p}</span></div>`)}
            </div>
            <div class="ticklist">
            ${ticks.map(([t, v, n], i) => {
                const big = i === ticks.length - 1;
                return html`<div class="row tickrow"><span class="time">${t}</span>${this.value("35.65", "px")}${this.value(v, big ? "big" : "amt")}<span class="s">${big ? "" : "S"}</span><span class="cnt">${n}</span></div>`;
            })}
            </div>
        </div>`;
    }

    private renderStrip() {
        return html`<div class="strip">
            ${stripItems.map(([k, v]) => {
                if (k === "d") return html`<div class="sep"></div>`;
                if (k === "i") return html`<div class="it"><svg width="26" height="26" viewBox="0 0 26 26">${iconMap[v]}</svg></div>`;
                return html`<div class="it ${k === "a" ? "act" : ""}">${v}</div>`;
            })}
        </div>`;
    }

    private renderStatus() {
        return html`<div class="status">
            <span class="sicon"></span>
            ${statusItems.map(([t, c, x], i) => {
                const next = i < statusItems.length - 1 ? statusItems[i + 1][2] : x + 20;
                const m = t.match(/^(.*?)(亿)$/);
                return html`<span class="st ${c}" style="width:${next - x}px">${m ? html`${m[1]}<span class="unit">亿</span>` : t}</span>`;
            })}
        </div>`;
    }

    render() {
        const disc = html`<svg width="17" height="17" viewBox="0 0 17 17"><circle cx="8.500" cy="8.500" r="8" fill="#808080"/><path d="M4.500 7l4 4 4-4" fill="none" stroke="#222" stroke-width="2"/></svg>`;
        return html`<div class="page">
            <div class="title">
                <svg class="logo" viewBox="0 0 25 24"><rect width="25" height="24" fill="#d81818"/><path d="M4 20c6-1 9-5 10-9l-5 1 12-9-2 12-2-4c-2 5-7 9-13 9z" fill="#fff"/></svg>
                <span class="app-name">通达信金融终端</span>
                <div class="menus">${menus.map((m) => html`<span class=${m === "发现" ? "dot" : m === "L1L2" ? "small" : ""}>${m}</span>`)}</div>
                <div class="alert"><span>交易未登录</span><span>宇晶股份</span></div>
                <div class="sys">${sysMenus.map((m) => html`<span>${m}</span>`)}</div>
                <div class="clock"><span>21:20:56</span><span>周五</span></div>
                <svg class="win" viewBox="0 0 156 33" height="33"><path d="M30 10l-6 7 6 7" fill="none" stroke="#333" stroke-width="2.500"/><path d="M56 16h12" stroke="#333" stroke-width="4"/><rect x="95" y="12" width="11" height="11" fill="none" stroke="#222" stroke-width="3"/><path d="M99 12V8h11v11h-4" fill="none" stroke="#222" stroke-width="2"/><path d="M131 9l12 14M143 9l-12 14" stroke="#333" stroke-width="2.500"/></svg>
            </div>
            <div class="body">
                <div class="left">
                    <div class="toolbar">
                        <div class="tb-icon"><svg width="16" height="18"><rect x="1" y="1" width="14" height="16" rx="3" fill="none" stroke="#777" stroke-width="2"/><rect x="8" y="4" width="4" height="10" fill="#999"/></svg></div>
                        <div class="periods">
                            ${periods.map((p) => html`<span class=${p === "日线" ? "on" : ""}>${p}${p === "更多" ? html`<svg width="9" height="15" viewBox="0 0 9 15"><path d="M1 1l6 6.500-6 6.500" fill="none" stroke="#bcbcbc" stroke-width="1.4"/></svg>` : ""}</span>`)}
                        </div>
                        <div class="tools">${tools.map((t) => html`<span>${t}</span>`)}</div>
                    </div>
                    <div class="panel p1">
                        <div class="legend">
                            <span>宇晶股份(日线)</span>
                            <span>${disc}</span><span>操盘主图</span>
                            <span class="red">粗红线上强势: 0.00</span>
                            <span class="blue">粗蓝线下弱势: 0.00</span>
                            <span class="white">参照其它指标: 0.00</span>
                            <span class="yellow">综合判断操作: 0.00</span>
                            <span class="red mn4">【操盘线】: 31.29${arrow("#ff2020")} : 31.29${arrow("#ff2020")}</span>
                            <span class="green m32">压力1: 34.98${arrow("#40e0f0", true)}</span>
                            <span class="violet m2">压力2: 57.64</span>
                            <span class="cyan">支撑: 28.81</span>
                            <span class="end">
                                <svg width="14" height="14"><path d="M7 1l6 6-6 6-6-6z" fill="none" stroke="#888"/></svg>
                                <svg width="16" height="18"><rect x="1" y="1" width="14" height="16" rx="3" fill="none" stroke="#777" stroke-width="2"/><rect x="8" y="4" width="4" height="10" fill="#999"/></svg>
                            </span>
                        </div>
                        ${this.renderMainChart()}
                    </div>
                    <div class="panel p2">
                        <div class="legend">
                            ${disc}<span>擒龙综合</span>
                            <span class="yellow">导弹: 0.00</span>
                            <span class="sky m4">妖股: 0.00</span>
                            <span class="magenta m7">龙飞: 1.00${arrow("#ff2020")}</span>
                        </div>
                        ${this.renderVolChart()}
                    </div>
                    <div class="panel p3">
                        <div class="legend">
                            ${disc}<span>粘合必涨</span>
                            <span class="yellow">AD: 435194.00${arrow("#ff2020")}</span>
                            <span class="red">AZ: 435194.00${arrow("#ff2020")}</span>
                            <span class="grey">: 0.00</span>
                        </div>
                        ${this.renderAdChart()}
                    </div>
                    ${this.renderTimeline()}
                    <div class="tabs t1">${tabs1.map((t) => html`<span class=${t === "设置" ? "teal" : ""}>${t}</span>`)}</div>
                    <div class="tabs t2">${tabs2.map((t) => html`<span class=${["综合资讯", "行业资讯", "互动问答"].includes(t) ? "gold" : ""}>${t}${t === "扩展" ? html`<i>∧</i>` : ""}</span>`)}</div>
                </div>
                ${this.renderQuote()}
                ${this.renderStrip()}
            </div>
            ${this.renderStatus()}
        </div>
        <div class="mark">
            <span class="cn">公式指标网</span>
            <svg viewBox="0 0 84 81">
                <path d="M6 58A38 38 0 0 1 78 32" fill="none" stroke="#d8654e" stroke-width="8"/>
                <path d="M80 42A38 38 0 0 1 40 78" fill="none" stroke="#e8c84a" stroke-width="8"/>
                <circle cx="40" cy="7" r="6" fill="#e8c84a"/>
                <text transform="translate(42 57) scale(.9 1.2)" text-anchor="middle" font-size="44" font-weight="900" fill="#e8c84a" font-family="Noto Sans CJK SC">美</text>
                <text transform="translate(9 58) rotate(60)" font-size="6" fill="#f4f4f4" font-family="Liberation Sans">www.9m8.cn</text>
            </svg>
            <span class="en">www.9m8.cn</span>
        </div>`;
    }
}
